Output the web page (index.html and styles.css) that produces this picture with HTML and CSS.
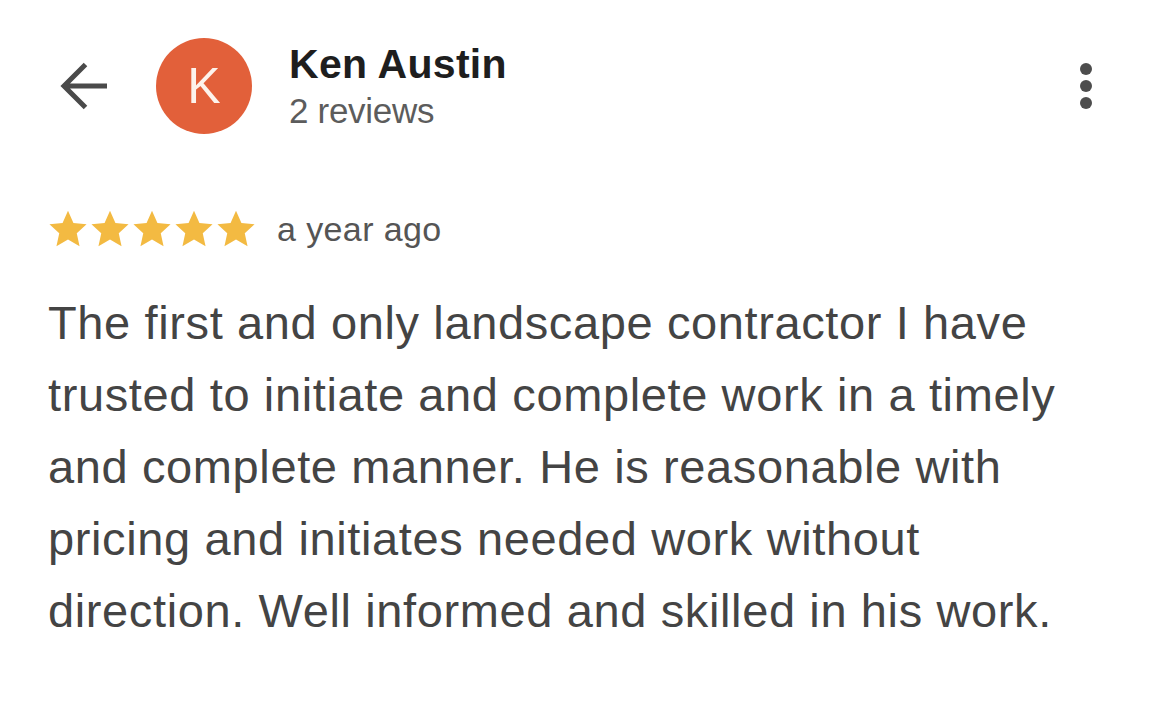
FILE: index.html
```html
<!DOCTYPE html>
<html lang="en">
<head>
<meta charset="utf-8">
<title>Ken Austin review</title>
<link rel="stylesheet" href="styles.css">
</head>
<body>
<main class="page">
  <header class="header">
    <div class="back" aria-label="Back">
      <svg width="50" height="48" viewBox="0 0 50 48">
        <path d="M48 24 H5 M26.5 2.5 L5 24 L26.5 45.5" fill="none" stroke="#4a4a4a" stroke-width="5" stroke-linecap="butt" stroke-linejoin="miter"/>
      </svg>
    </div>
    <div class="avatar">K</div>
    <div class="who">
      <div class="name">Ken Austin</div>
      <div class="count">2 reviews</div>
    </div>
    <div class="more" aria-label="More options">
      <span class="dot"></span><span class="dot"></span><span class="dot"></span>
    </div>
  </header>

  <section class="review">
    <div class="rating">
      <div class="stars">
        <svg class="star" viewBox="0 0 24 24"><path d="M12 1.6l3.1 6.9 7.5.8-5.6 5.1 1.6 7.4L12 18l-6.6 3.8 1.6-7.4-5.6-5.1 7.5-.8z"/></svg>
        <svg class="star" viewBox="0 0 24 24"><path d="M12 1.6l3.1 6.9 7.5.8-5.6 5.1 1.6 7.4L12 18l-6.6 3.8 1.6-7.4-5.6-5.1 7.5-.8z"/></svg>
        <svg class="star" viewBox="0 0 24 24"><path d="M12 1.6l3.1 6.9 7.5.8-5.6 5.1 1.6 7.4L12 18l-6.6 3.8 1.6-7.4-5.6-5.1 7.5-.8z"/></svg>
        <svg class="star" viewBox="0 0 24 24"><path d="M12 1.6l3.1 6.9 7.5.8-5.6 5.1 1.6 7.4L12 18l-6.6 3.8 1.6-7.4-5.6-5.1 7.5-.8z"/></svg>
        <svg class="star" viewBox="0 0 24 24"><path d="M12 1.6l3.1 6.9 7.5.8-5.6 5.1 1.6 7.4L12 18l-6.6 3.8 1.6-7.4-5.6-5.1 7.5-.8z"/></svg>
      </div>
      <span class="when">a year ago</span>
    </div>
    <p class="text">The first and only landscape contractor I have trusted to initiate and complete work in a timely and complete manner. He is reasonable with pricing and initiates needed work without direction. Well informed and skilled in his work.</p>
  </section>
</main>
</body>
</html>
```

FILE: styles.css
```css
html, body {
  margin: 0;
  padding: 0;
  background: #ffffff;
}

body {
  font-family: "Liberation Sans", Arial, sans-serif;
  color: #444444;
}

.page {
  width: 1170px;
  height: 713px;
  overflow: hidden;
}

.header {
  display: flex;
  align-items: center;
  height: 96px;
  margin-top: 38px;
  padding-left: 59px;
  padding-right: 78px;
}

.back {
  width: 50px;
  height: 48px;
  display: flex;
}

.avatar {
  width: 96px;
  height: 96px;
  border-radius: 50%;
  background: #e2603a;
  color: #fdf3ec;
  font-size: 50px;
  line-height: 96px;
  text-align: center;
  margin-left: 47px;
  flex: none;
}

.who {
  margin-left: 37px;
  display: flex;
  flex-direction: column;
}

.name {
  font-weight: 700;
  font-size: 41px;
  line-height: 46px;
  letter-spacing: 0.3px;
  color: #1e1e1e;
}

.count {
  font-size: 35px;
  line-height: 40px;
  letter-spacing: -0.3px;
  color: #5c5c5c;
  margin-top: 4px;
}

.more {
  margin-left: auto;
  display: flex;
  flex-direction: column;
  align-items: center;
  gap: 5px;
}

.dot {
  width: 12px;
  height: 12px;
  border-radius: 50%;
  background: #4d4d4d;
}

.review {
  padding-left: 47px;
  padding-right: 40px;
}

.rating {
  display: flex;
  align-items: center;
  height: 40px;
  margin-top: 75px;
}

.stars {
  display: flex;
}

.star {
  width: 42px;
  height: 42px;
  fill: #f3ba42;
}

.when {
  margin-left: 20px;
  font-size: 34px;
  letter-spacing: 0.4px;
  color: #555555;
}

.text {
  margin: 38px 0 0 1px;
  font-size: 47px;
  line-height: 72px;
  letter-spacing: 0.62px;
  color: #444444;
  width: 1080px;
}
```
